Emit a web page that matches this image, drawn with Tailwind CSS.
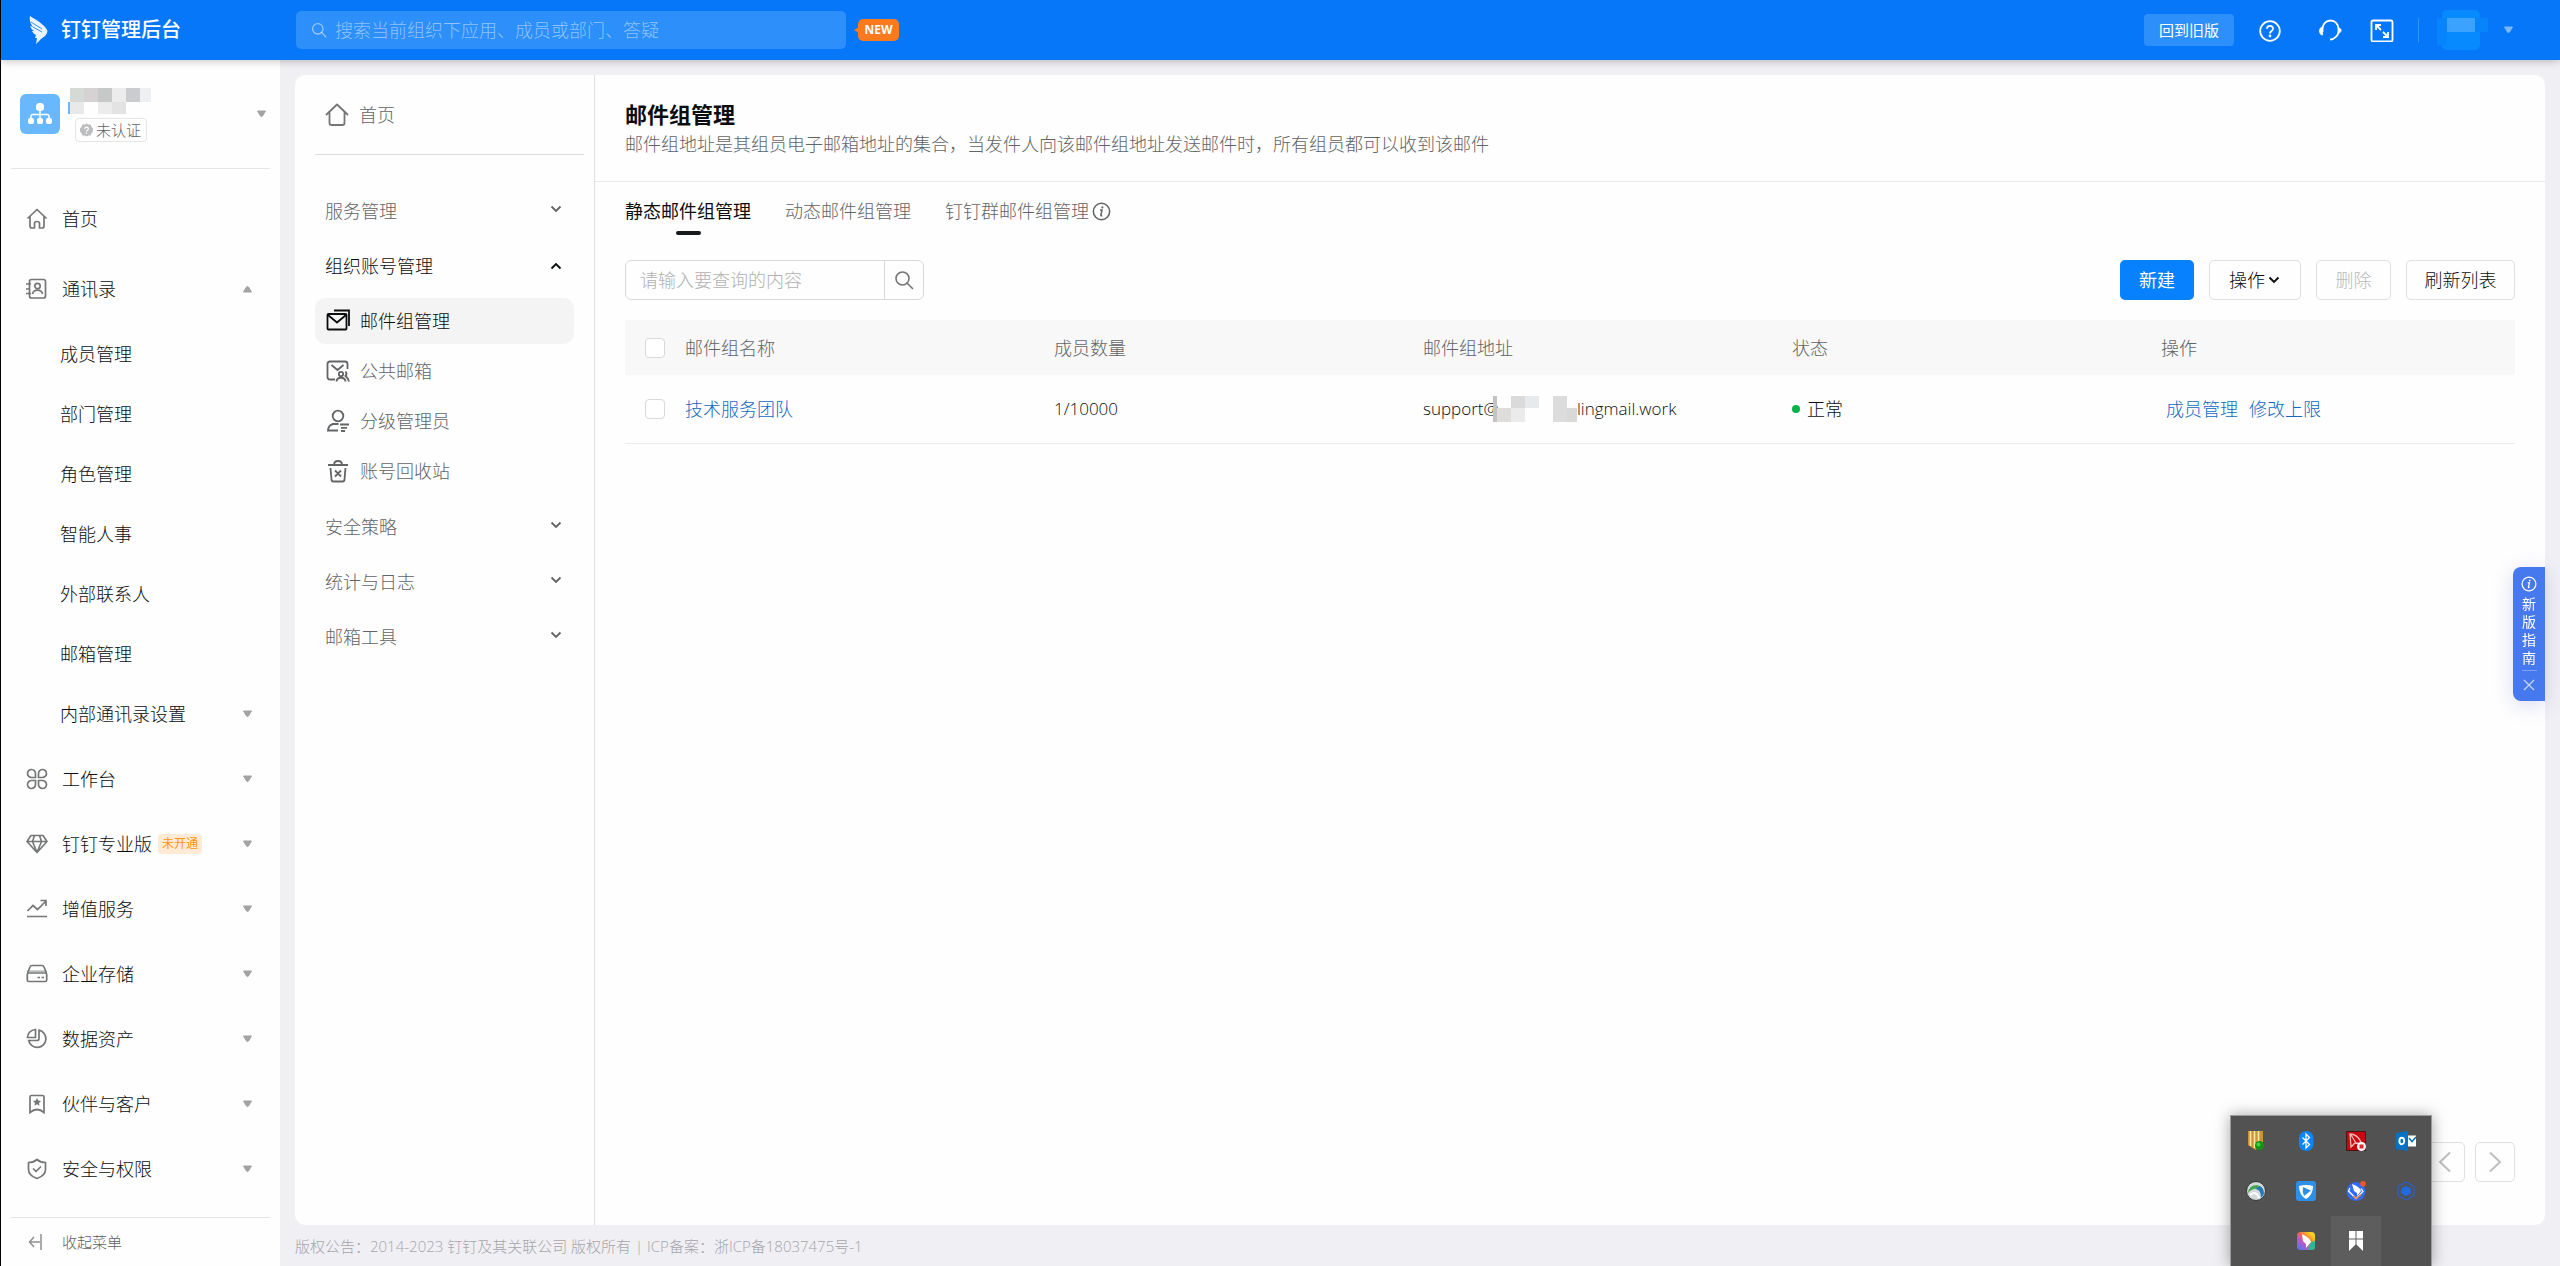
<!DOCTYPE html>
<html lang="zh-CN">
<head>
<meta charset="utf-8">
<meta name="viewport" content="width=device-width, initial-scale=1">
<title>钉钉管理后台</title>
<script src="https://cdn.jsdelivr.net/npm/@tailwindcss/browser@4"></script>
</head>
<body class="flex min-h-screen flex-col border-l border-black bg-[#f0eff4] font-['Open_Sans','Noto_Sans_CJK_SC',sans-serif] text-[18px] leading-6 font-light text-[#0b0d0f]">

<svg class="hidden" aria-hidden="true">
  <symbol id="caret-down" viewBox="0 0 11 8"><path d="M1.500 1h8L6.500 6q-1 1.200-2 0z" fill="currentColor" stroke="currentColor" stroke-linejoin="round"/></symbol>
  <symbol id="chevron" viewBox="0 0 14 10"><path d="M2.500 2.500l4.500 4.500 4.500-4.500" fill="none" stroke="currentColor" stroke-width="1.900"/></symbol>
  <symbol id="info" viewBox="0 0 20 20"><g fill="none" stroke="currentColor" stroke-width="1.600"><circle cx="10" cy="10" r="8.600"/><path d="M8.500 8.500h2L9.300 14q0 .8 1.400 .2"/></g><circle cx="10.900" cy="5.700" r="1.100" fill="currentColor"/></symbol>
  <symbol id="magnifier" viewBox="0 0 20 20"><g fill="none" stroke="currentColor" stroke-width="1.600" stroke-linecap="round"><circle cx="8.500" cy="8.500" r="6.500"/><path d="M13 13l5.500 5.500"/></g></symbol>
</svg>

<header class="relative z-10 flex h-[60px] shrink-0 items-center bg-[#0677f8] text-white shadow-[0_1px_8px_rgba(0,0,0,0.25)]">
  <a href="#" class="flex w-[295px] items-center pl-7 text-[20px] font-medium">
    <svg class="mr-3 h-7 w-5" viewBox="0 0 20 28" fill="#eaf4ff"><path d="M1 0c3 2 12 7 15 11 2 3 3 3 2 6-1 3-4 4-6 6l-5 5 1-6-2 0 1-3c-2-1-3-2-4-4l2 0c-2-1-3-3-4-5l3 1C2 9 0 4 1 0z"/><path d="M2 6l11 7M4 11l9 5" stroke="#0677f8" stroke-width=".8"/></svg>
    <span>钉钉管理后台</span>
  </a>
  <label class="flex h-[38px] w-[550px] items-center rounded-[5px] bg-[#2c8ffa] pl-[15px]">
    <svg class="h-4 w-4 text-white/50"><use href="#magnifier"/></svg>
    <input type="search" aria-label="搜索" placeholder="搜索当前组织下应用、成员或部门、答疑" class="ml-2 flex-1 bg-transparent outline-none placeholder:text-[#8ec3fc]">
  </label>
  <span class="relative ml-3 flex h-[22px] w-[41px] items-center justify-center rounded-[5px] bg-[#fb7a1e] text-[12px] font-bold"><i class="absolute top-[8px] -left-1 border-y-[3px] border-r-[5px] border-y-transparent border-r-[#fb7a1e]"></i>NEW</span>
  <div class="ml-auto flex items-center">
    <button class="h-8 w-[90px] rounded-[4px] bg-[#2c8ffa] text-[15px] font-normal">回到旧版</button>
    <button aria-label="帮助" class="ml-6"><svg class="h-6 w-6" viewBox="0 0 24 24" fill="none" stroke="#fff" stroke-width="1.800"><circle cx="12" cy="13" r="9.800"/><path d="M9 10.800c0-4 6-4 6 0 0 2.300-3 2-3 4.700" /><circle cx="12" cy="18" r=".5"/></svg></button>
    <button aria-label="客服" class="ml-9"><svg class="h-6 w-6" viewBox="0 0 24 24" fill="none" stroke="#fff" stroke-width="1.800"><path d="M4.500 14V11a8 8.500 0 0 1 16 0v2.500c0 4-4 7.500-8.500 8.200"/><path d="M4.500 9v8C.5 17 .5 9 4.500 9zM20.500 9.800v5.400c3.500-.8 3.500-4.600 0-5.400z" fill="#fff" stroke-width=".8"/></svg></button>
    <button aria-label="全屏" class="ml-7"><svg class="h-6 w-6" viewBox="0 0 24 24" fill="none" stroke="#fff" stroke-width="1.800"><rect x="1.500" y="2.500" width="21" height="21" rx="1.500"/><path d="M6 12V7h5M6 7l5 5M18 14v5h-5M18 19l-5-5"/></svg></button>
    <i class="ml-6 h-6 w-px bg-white/20"></i>
    <button aria-label="账户" class="ml-[18px] flex items-center">
      <svg class="h-10 w-[51px]" viewBox="0 0 51 40"><rect x="5" width="38" height="40" rx="5" fill="#078afd"/><path d="M0 8h10v27H0z" fill="#0783fb"/><path d="M38 8h13v14H38z" fill="#0783fb"/><path d="M10 8h28v14H10z" fill="#3ba2fe"/></svg>
      <svg class="mr-[46px] ml-[15px] h-2 w-[11px] text-[#7db7fb]"><use href="#caret-down"/></svg>
    </button>
  </div>
</header>

<div class="flex flex-1">
  <aside class="flex w-[279px] shrink-0 flex-col bg-[#fefefe]">
    <div class="mx-[10px] flex h-[109px] items-center border-b border-[#e5e5e6] pl-[9px]">
      <span class="flex h-10 w-10 items-center justify-center rounded-md bg-[#69b8fe]">
        <svg class="h-6 w-6" viewBox="0 0 24 24" fill="#fff"><rect x="8" y="1" width="8" height="8" rx="3.500"/><path d="M3 18v-3.500q0-2 2-2h14q2 0 2 2V18M12 9v8" fill="none" stroke="#fff" stroke-width="1.500"/><rect y="16" width="6" height="6" rx="2"/><rect x="9" y="16" width="6" height="6" rx="2"/><rect x="18" y="16" width="6" height="6" rx="2"/></svg>
      </span>
      <div class="ml-2 pt-0.5">
        <svg class="h-[26px] w-[84px]" viewBox="0 0 84 26" shape-rendering="crispEdges"><path d="M0 14h2v12H0z" fill="#69b8fe"/><path d="M2 0h14v14H2z" fill="#d6dad6"/><path d="M16 0h14v14H16z" fill="#d6d2d4"/><path d="M30 0h14v14H30z" fill="#c7c9c8"/><path d="M44 0h14v14H44z" fill="#ececed"/><path d="M58 0h14v14H58z" fill="#cbcccf"/><path d="M72 0h11v14H72z" fill="#eeeff2"/><path d="M2 14h14v12H2z" fill="#e9e9e9"/><path d="M30 14h14v12H30z" fill="#ececed"/><path d="M44 14h14v12H44z" fill="#e3e3e3"/></svg>
        <span class="mt-1 ml-[7px] flex h-[24px] w-[72px] items-center gap-[3px] rounded-[4px] border border-[#e5e5e6] pl-1 text-[15px] text-[#5f6164]">
          <svg class="h-[14px] w-[13px] shrink-0" viewBox="0 0 14 14"><path d="M7 0l2 1.200 2.500 0 .8 2.300L14 5.500v3l-1.700 2-.8 2.300H9L7 14l-2-1.200H2.500l-.8-2.300L0 8.500v-3l1.700-2 .8-2.300H5z" fill="#bcbdbe"/><path d="M5 5.800c0-2.600 4-2.600 4 0 0 1.500-2 1.300-2 2.800M7 9.800v1.400" fill="none" stroke="#fff" stroke-width="1.200"/></svg>未认证</span>
      </div>
      <svg class="mr-[3px] ml-auto h-2 w-[11px] text-[#a2a3a5]"><use href="#caret-down"/></svg>
    </div>

    <nav class="pt-[15px]">
      <ul>
        <li><a href="#" class="flex h-[70px] items-center gap-[14px] pl-[25px]"><svg class="h-[22px] w-[22px]" viewBox="0 0 22 22" fill="none" stroke="#747677" stroke-width="1.700" stroke-linejoin="round"><path d="M1.500 10.500L11 1.500l9.500 9M4 8.500V18q0 2 2 2h2.500v-4.500q0-2 2.500-2t2.500 2V20H16q2 0 2-2V8.500"/></svg>首页</a></li>
        <li><a href="#" class="flex h-[70px] items-center gap-[14px] pr-[27px] pl-[25px]"><svg class="h-[22px] w-[22px]" viewBox="0 0 22 22" fill="none" stroke="#747677" stroke-width="1.700"><rect x="3.500" y="1.500" width="16" height="18.500" rx="2"/><circle cx="11.500" cy="8" r="2.700"/><path d="M6.500 16c1-5.300 9-5.300 10 0M0 6h5M0 11h4M0 15.500h5"/></svg>通讯录<svg class="ml-auto h-2 w-[11px] rotate-180 text-[#a2a3a5]"><use href="#caret-down"/></svg></a>
          <ul class="*:flex *:h-[60px] *:items-center *:pr-[27px] *:pl-[59px]">
            <li><a href="#">成员管理</a></li>
            <li><a href="#">部门管理</a></li>
            <li><a href="#">角色管理</a></li>
            <li><a href="#">智能人事</a></li>
            <li><a href="#">外部联系人</a></li>
            <li><a href="#">邮箱管理</a></li>
            <li><a href="#" class="flex flex-1 items-center justify-between">内部通讯录设置<svg class="h-2 w-[11px] text-[#a2a3a5]"><use href="#caret-down"/></svg></a></li>
          </ul>
        </li>
        <li><a href="#" class="mt-0.5 flex h-[65px] items-center gap-[14px] pr-[27px] pl-[25px]"><svg class="h-[22px] w-[22px]" viewBox="0 0 22 22" fill="none" stroke="#747677" stroke-width="1.700"><path d="M9.500 9.500H5.800A4 4 0 1 1 9.500 5.800zM12.500 9.500V5.800a4 4 0 1 1 3.700 3.700zM9.500 12.500v3.700a4 4 0 1 1-3.700-3.700zM12.500 12.500h3.700a4 4 0 1 1-3.700 3.700z"/></svg>工作台<svg class="ml-auto h-2 w-[11px] text-[#a2a3a5]"><use href="#caret-down"/></svg></a></li>
        <li><a href="#" class="flex h-[65px] items-center gap-[14px] pr-[27px] pl-[25px]"><svg class="h-[22px] w-[22px]" viewBox="0 0 22 22" fill="none" stroke="#747677" stroke-width="1.600" stroke-linejoin="round"><path d="M5 2.500h12l4 6L11 19.500 1 8.500zM1 8.500h20M8.500 2.500L6.500 8.500l4.500 11 4.500-11-2-6"/></svg><span>钉钉专业版</span><span class="-ml-2 rounded-[4px] bg-[#ffead6] px-1 text-[12px] leading-5 font-normal text-[#ff9509]">未开通</span><svg class="ml-auto h-2 w-[11px] text-[#a2a3a5]"><use href="#caret-down"/></svg></a></li>
        <li><a href="#" class="flex h-[65px] items-center gap-[14px] pr-[27px] pl-[25px]"><svg class="h-[22px] w-[22px]" viewBox="0 0 22 22" fill="none" stroke="#747677" stroke-width="1.700"><path d="M1.500 13L7 7.500l4.500 4L20 3M14.500 2.500h5.500V8M1 18.500h20"/></svg>增值服务<svg class="ml-auto h-2 w-[11px] text-[#a2a3a5]"><use href="#caret-down"/></svg></a></li>
        <li><a href="#" class="flex h-[65px] items-center gap-[14px] pr-[27px] pl-[25px]"><svg class="h-[22px] w-[22px]" viewBox="0 0 22 22" fill="none" stroke="#747677" stroke-width="1.700"><path d="M1.500 10l2.500-6q.5-1.500 2-1.500h10q1.500 0 2 1.500l2.500 6"/><rect x="1.300" y="10" width="19.400" height="8.500" rx="1.500"/><path d="M1.500 8.200h19" stroke-opacity=".5"/><path d="M11.500 14.500h2.500M15.500 14.500h2.500"/></svg>企业存储<svg class="ml-auto h-2 w-[11px] text-[#a2a3a5]"><use href="#caret-down"/></svg></a></li>
        <li><a href="#" class="flex h-[65px] items-center gap-[14px] pr-[27px] pl-[25px]"><svg class="h-[22px] w-[22px]" viewBox="0 0 22 22" fill="none" stroke="#747677" stroke-width="1.700"><path d="M9.500 1.500v8h-8q.5-7 8-8zM13 2.200a8.700 8.700 0 1 1-10.300 10.300H11q2 0 2-2z"/></svg>数据资产<svg class="ml-auto h-2 w-[11px] text-[#a2a3a5]"><use href="#caret-down"/></svg></a></li>
        <li><a href="#" class="flex h-[65px] items-center gap-[14px] pr-[27px] pl-[25px]"><svg class="h-[22px] w-[22px]" viewBox="0 0 22 22"><path d="M4 19.500V4q0-1.500 1.500-1.500h11Q18 2.500 18 4v15.500q-7-6-14 0z" fill="none" stroke="#747677" stroke-width="1.700"/><path d="M11 5l1.200 2.600 2.800.3-2 2 .5 2.800L11 11.300l-2.500 1.400.5-2.800-2-2 2.800-.3z" fill="#747677"/></svg>伙伴与客户<svg class="ml-auto h-2 w-[11px] text-[#a2a3a5]"><use href="#caret-down"/></svg></a></li>
        <li><a href="#" class="flex h-[65px] items-center gap-[14px] pr-[27px] pl-[25px]"><svg class="h-[22px] w-[22px]" viewBox="0 0 22 22" fill="none" stroke="#747677" stroke-width="1.700" stroke-linejoin="round"><path d="M11 1.500q3.500 3 8.500 3v7q0 6-8.500 9-8.500-3-8.500-9v-7q5 0 8.500-3zM7 10.500l3 3 5-5"/></svg>安全与权限<svg class="ml-auto h-2 w-[11px] text-[#a2a3a5]"><use href="#caret-down"/></svg></a></li>
      </ul>
    </nav>
    <button class="mx-[10px] mt-auto flex h-[49px] items-center gap-5 border-t border-[#e5e5e6] pl-[17px] text-[15px] text-[#5f6164]"><svg class="h-4 w-[14px]" viewBox="0 0 14 16" fill="none" stroke="#8f9092" stroke-width="1.500"><path d="M13 0v16M12 8H1.500M6 3L1.500 8 6 13"/></svg>收起菜单</button>
  </aside>

  <div class="flex flex-1 flex-col pt-[15px] pr-[15px] pl-[15px]">
    <div class="flex flex-1 rounded-[10px] bg-[#fefefe]">
      <nav class="w-[300px] shrink-0 border-r border-[#e0e0e1] pr-[10px] pl-5 text-[#626466]">
        <a href="#" class="flex h-20 items-center gap-[10px] border-b border-[#dcdcdd] pl-[10px]"><svg class="h-6 w-6" viewBox="0 0 24 24" fill="none" stroke="#747677" stroke-width="1.800" stroke-linejoin="round"><path d="M1 12L12 1.500 23 12M4.500 9.500V20q0 2 2 2h11q2 0 2-2V9.500"/></svg>首页</a>
        <div class="mt-7 pr-[10px]">
          <button class="flex h-[55px] w-full items-center justify-between pr-[11px] pl-[10px]">服务管理<svg class="mb-1 h-[10px] w-[14px]"><use href="#chevron"/></svg></button>
          <button class="flex h-[55px] w-full items-center justify-between pr-[11px] pl-[10px] text-[#0b0d0f]">组织账号管理<svg class="h-[10px] w-[14px] rotate-180"><use href="#chevron"/></svg></button>
          <ul class="flex flex-col gap-1 pt-[5px] pb-[5px] *:flex *:h-[46px] *:items-center *:rounded-[10px] *:pl-[11px]">
            <li class="bg-[#f4f4f4] text-[#0b0d0f]"><a href="#" class="flex items-center gap-[10px]"><svg class="h-6 w-6" viewBox="0 0 24 24" fill="none" stroke="currentColor" stroke-width="1.800"><rect x="1.500" y="5" width="19" height="15.500" rx="1"/><path d="M2 6l9 7.500L20 6M8 1.500h15V17"/></svg>邮件组管理</a></li>
            <li><a href="#" class="flex items-center gap-[10px]"><svg class="h-6 w-6" viewBox="0 0 24 24" fill="none" stroke="currentColor" stroke-width="1.800"><path d="M9 20.500H4q-2.500 0-2.500-2.500V5Q1.500 2.500 4 2.500h15q2.500 0 2.500 2.500v5M5.500 6l6 5 6-5"/><circle cx="15" cy="15" r="2.200"/><path d="M10.500 22.500c.5-5 8.500-5 9 0M19.500 12.500q2 2.500 0 4.500 2.500 2 3.500 5.500"/></svg>公共邮箱</a></li>
            <li><a href="#" class="flex items-center gap-[10px]"><svg class="h-6 w-6" viewBox="0 0 24 24" fill="none" stroke="currentColor" stroke-width="1.800"><circle cx="12" cy="7" r="5.300"/><path d="M12.500 15H7q-4.500 1-5 6.500h10M14 15.500h9M15 18.800h6M15 22h4"/></svg>分级管理员</a></li>
            <li><a href="#" class="flex items-center gap-[10px]"><svg class="h-6 w-6" viewBox="0 0 24 24" fill="none" stroke="currentColor" stroke-width="1.800"><path d="M2 6h20M8 6q0-4 4-4t4 4M4.500 9L5.500 20.500q0 2 2 2h9q2 0 2-2L19.500 9M9 11.500l6 6M15 11.500l-6 6"/></svg>账号回收站</a></li>
          </ul>
          <button class="flex h-[55px] w-full items-center justify-between pr-[11px] pl-[10px]">安全策略<svg class="mb-1 h-[10px] w-[14px]"><use href="#chevron"/></svg></button>
          <button class="flex h-[55px] w-full items-center justify-between pr-[11px] pl-[10px]">统计与日志<svg class="mb-1 h-[10px] w-[14px]"><use href="#chevron"/></svg></button>
          <button class="flex h-[55px] w-full items-center justify-between pr-[11px] pl-[10px]">邮箱工具<svg class="mb-1 h-[10px] w-[14px]"><use href="#chevron"/></svg></button>
        </div>
      </nav>

      <main class="flex flex-1 flex-col">
        <div class="h-[107px] border-b border-[#e8e8e9] px-[30px] pt-[23px]">
          <h1 class="text-[22px] leading-8 font-bold">邮件组管理</h1>
          <p class="leading-7 text-[#626466]">邮件组地址是其组员电子邮箱地址的集合，当发件人向该邮件组地址发送邮件时，所有组员都可以收到该邮件</p>
        </div>
        <div class="flex flex-1 flex-col px-[30px]">
          <div class="flex gap-[34px] pt-4 text-[#626466]">
            <button class="flex flex-col items-center pt-[1px] font-normal text-[#0b0d0f]">静态邮件组管理<i class="mt-2 h-1 w-[25px] rounded-full bg-[#171a1d]"></i></button>
            <button class="flex pt-[1px]">动态邮件组管理</button>
            <button class="flex items-start gap-[3px] pt-[1px]">钉钉群邮件组管理<svg class="mt-[3px] h-[19px] w-[19px]"><use href="#info"/></svg></button>
          </div>
          <div class="mt-[25px] flex items-center gap-[15px]">
            <form class="mr-auto flex h-10">
              <input type="text" aria-label="查询内容" placeholder="请输入要查询的内容" class="w-[260px] rounded-l-[6px] border border-[#d9d9da] bg-transparent pl-[14px] outline-none placeholder:text-[#b0b1b2]">
              <button type="button" aria-label="查询" class="-ml-px flex w-10 items-center justify-center rounded-r-[6px] border border-[#d9d9da] text-[#747677]"><svg class="h-5 w-5"><use href="#magnifier"/></svg></button>
            </form>
            <button class="h-10 w-[74px] rounded-[5px] bg-[#0781fe] font-normal text-white">新建</button>
            <button aria-haspopup="menu" class="flex h-10 w-[92px] items-center justify-center gap-0.5 rounded-[5px] border border-[#e0e0e1]">操作<svg class="h-[10px] w-[14px]"><use href="#chevron"/></svg></button>
            <button disabled class="h-10 w-[75px] rounded-[5px] border border-[#e0e0e1] text-[#b9babb]">删除</button>
            <button class="h-10 w-[109px] rounded-[5px] border border-[#e0e0e1]">刷新列表</button>
          </div>
          <table class="mt-5 w-full table-fixed text-left *:*:*:p-0 *:*:*:not-first:pl-[15px]">
            <colgroup><col class="w-[45px]"><col><col><col><col><col></colgroup>
            <thead class="bg-[#f8f8f8] text-[#626466]">
              <tr class="h-[55px]">
                <th><input type="checkbox" aria-label="全选" class="ml-5 block h-5 w-5 appearance-none rounded-[4px] border border-[#d9d9da] bg-white"></th>
                <th class="font-light">邮件组名称</th><th class="font-light">成员数量</th><th class="font-light">邮件组地址</th><th class="font-light">状态</th><th class="font-light">操作</th>
              </tr>
            </thead>
            <tbody>
              <tr class="h-[68px] border-b border-[#ebebec]">
                <td><input type="checkbox" aria-label="选择技术服务团队" class="ml-5 block h-5 w-5 appearance-none rounded-[4px] border border-[#d9d9da] bg-white"></td>
                <td><a href="#" class="text-[#1268c2]">技术服务团队</a></td>
                <td class="text-[17px]">1/10000</td>
                <td class="text-[17px]"><span class="flex items-center"><span class="w-[70px]">support@</span><svg class="relative h-[26px] w-[84px]" viewBox="0 0 84 26" shape-rendering="crispEdges"><path d="M0 0h4v26H0z" fill="#c4c3c4"/><path d="M18 0h14v12H18z" fill="#dbdadb"/><path d="M32 0h14v12H32z" fill="#e6eaec"/><path d="M60 0h14v26H60z" fill="#dddcdd"/><path d="M4 12h14v14H4z" fill="#dedddb"/><path d="M18 12h14v14H18z" fill="#ebebeb"/><path d="M74 12h10v14H74z" fill="#d9d9d8"/></svg>lingmail.work</span></td>
                <td><span class="flex items-center gap-[7px]"><i class="h-2 w-2 rounded-full bg-[#05b148]"></i>正常</span></td>
                <td><span class="flex gap-[11px] pl-[5px] text-[#1268c2]"><a href="#">成员管理</a><a href="#">修改上限</a></span></td>
              </tr>
            </tbody>
          </table>
          <div class="mt-auto mb-[43px] flex justify-end gap-[10px] text-[#bdbebf]">
            <button aria-label="上一页" class="flex h-10 w-10 items-center justify-center rounded-[5px] border border-[#e0e0e1]"><svg class="h-5 w-5" viewBox="0 0 20 20" fill="none" stroke="currentColor" stroke-width="2"><path d="M15 .5L5 10l10 9.500"/></svg></button>
            <button aria-label="下一页" class="flex h-10 w-10 items-center justify-center rounded-[5px] border border-[#e0e0e1]"><svg class="h-5 w-5" viewBox="0 0 20 20" fill="none" stroke="currentColor" stroke-width="2"><path d="M5 .5L15 10 5 19.500"/></svg></button>
          </div>
        </div>
      </main>
    </div>
    <footer class="flex h-[41px] items-center text-[15px] text-[#a6a6ab]">版权公告：2014-2023 钉钉及其关联公司 版权所有 | ICP备案：浙ICP备18037475号-1</footer>
  </div>
</div>

<!-- Floating guide tab -->
<div class="fixed top-[567px] right-[15px] flex h-[134px] w-8 flex-col items-center rounded-l-[8px] bg-[#4679ee] pt-[9px] text-white shadow-[0_4px_20px_rgba(70,80,200,0.2)]">
  <svg class="h-4 w-4 shrink-0"><use href="#info"/></svg>
  <a href="#" class="mt-[3px] w-[14px] text-[14px] leading-[18px] font-normal">新版指南</a>
  <i class="mt-[3px] h-px w-[15px] bg-white/30"></i>
  <button aria-label="关闭" class="mt-2"><svg class="h-3 w-3" viewBox="0 0 12 12" stroke="#c5d5fa" stroke-width="1.300"><path d="M1 1l10 10M11 1L1 11"/></svg></button>
</div>

<!-- System tray flyout -->
<div class="fixed right-[128px] bottom-0 z-20 grid h-[151px] w-[202px] grid-cols-4 grid-rows-3 border border-b-0 border-[#9b9b9b] bg-[#525252] shadow-[0_0_14px_rgba(0,0,0,0.35)] *:flex *:items-center *:justify-center">
  <span><svg class="h-5 w-5" viewBox="0 0 20 20"><path d="M2 0h15v13l-7.500 6L2 14z" fill="#c99537"/><path d="M4.500 0v15M8.500 0v17M12.500 0v15" stroke="#fbe7a8" stroke-width="1.600"/><circle cx="13.500" cy="14.500" r="4.500" fill="#129312"/><circle cx="12.500" cy="13.500" r="2" fill="#43d043"/></svg></span>
  <span><svg class="h-5 w-5" viewBox="0 0 20 20"><rect x="3" width="14.500" height="20" rx="7" fill="#0a84ff"/><path d="M6.500 6.500l7 7L10 17V3l3.500 3.500-7 7" fill="none" stroke="#fff" stroke-width="1.300"/></svg></span>
  <span><svg class="h-5 w-5" viewBox="0 0 20 20"><rect width="20" height="20" rx="1" fill="#4a1216"/><rect x="1" y="1" width="18" height="18" fill="#c90710"/><path d="M5 16L4 3q7 0 11 8l3 2-8-1q-2 0-3 2zM5 4l5 8" fill="none" stroke="#f2b5b5" stroke-width="1.300"/><circle cx="15.500" cy="15.500" r="4.500" fill="#fff"/><rect x="13.500" y="13.500" width="4" height="4" fill="#e1262b"/></svg></span>
  <span><svg class="h-5 w-5" viewBox="0 0 20 20"><path d="M9 4.500h11v11H9z" fill="#fff"/><path d="M0 2l12-2v20L0 18z" fill="#0672c4"/><path d="M13 7l3 3.500L20 6" fill="none" stroke="#0672c4" stroke-width="1.500"/><ellipse cx="5.800" cy="10" rx="2.400" ry="3.200" fill="none" stroke="#fff" stroke-width="1.900"/></svg></span>
  <span><svg class="h-5 w-5" viewBox="0 0 20 20"><circle cx="10" cy="10" r="9.500" fill="#d3dadb" stroke="#333"/><path d="M2 12q1-8 9-8 5 1 6 8-5-6-9-4-4 1-6 4z" fill="#45a64f"/><path d="M9 8q6 0 6 9l3-4q0-6-4-8z" fill="#2677b6"/><path d="M4 14q6-5 9 3" fill="none" stroke="#fff" stroke-width="2"/></svg></span>
  <span><svg class="h-5 w-5" viewBox="0 0 20 20"><rect width="20" height="20" rx="3" fill="#2e8fe8"/><path d="M3 5q7-2 14 0 0 9-7 13Q3 14 3 5z" fill="#fff"/><path d="M7 6l8 3.500L8 15q-2-4-1-9z" fill="#2e8fe8"/></svg></span>
  <span><svg class="h-5 w-5" viewBox="0 0 20 20"><circle cx="10" cy="10.500" r="9.500" fill="#2f6cf3"/><path d="M4 7L2.500 10 10 17.500l7-7-2-3" fill="none" stroke="#fff" stroke-width="1.300"/><path d="M6 3q8 3 9 7l-4 5v-3L8 10z" fill="#fff"/><path d="M7 15l3 2.500 5-4" fill="none" stroke="#f18b2b" stroke-width="1.500"/><circle cx="17" cy="2.800" r="2.800" fill="#f4572b"/></svg></span>
  <span><svg class="h-5 w-5" viewBox="0 0 20 20" stroke="#2a62c8"><path d="M10 1l8 4.500v9L10 19l-8-4.500v-9z" fill="none" stroke-width="1.200"/><path d="M10 5l4.500 2.500v5L10 15l-4.500-2.500v-5z" fill="#1f6be0"/></svg></span>
  <span></span>
  <span><svg class="h-[18px] w-[18px]" viewBox="0 0 18 18"><defs><linearGradient id="rainbow" x1="0" y1="1" x2="1" y2="0"><stop stop-color="#3f7df0"/><stop offset=".35" stop-color="#b45bc9"/><stop offset=".55" stop-color="#f5644d"/><stop offset=".8" stop-color="#f8c51c"/><stop offset="1" stop-color="#e8e02a"/></linearGradient></defs><rect width="18" height="18" rx="3.500" fill="url(#rainbow)"/><path d="M11 18q0-8 7-9v6q0 3-3 3z" fill="#2fb596"/><path d="M5 2q8 4 9 8l-5 6V12L6 9z" fill="#fff"/></svg></span>
  <span class="bg-[#5d5d5d]"><svg class="h-5 w-[14px]" viewBox="0 0 14 20" fill="#fff"><path d="M0 0h6.500v7.500H0zM7.500 0H14v7.500H7.500zM0 8.500h6.500v5L0 20zM7.500 8.500H14V20l-6.500-6.500z"/></svg></span>
  <span></span>
</div>
</body>
</html>
